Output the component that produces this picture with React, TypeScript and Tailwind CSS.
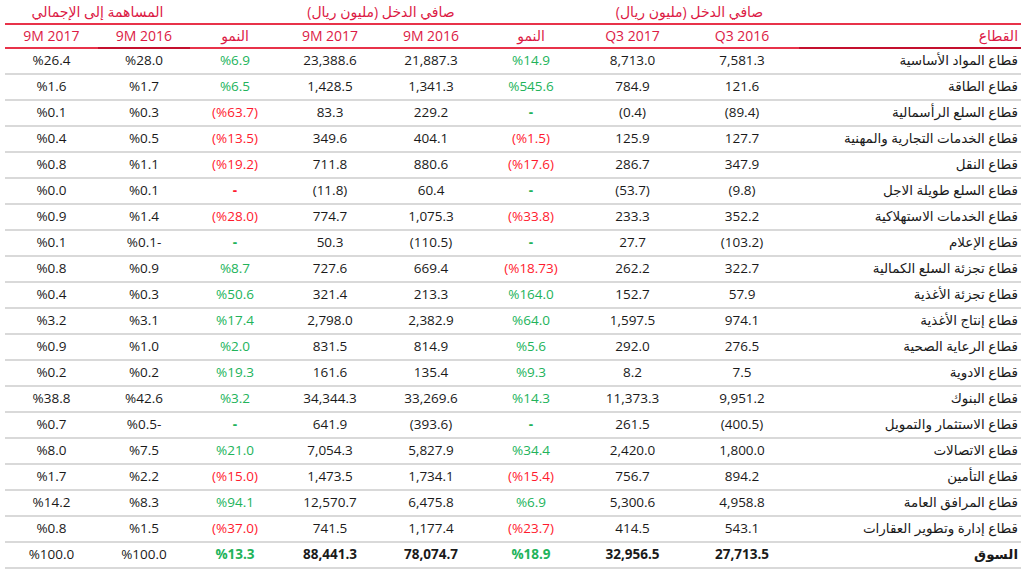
import React from "react";

// sector, Q3 2016, Q3 2017, growth, 9M 2016, 9M 2017, growth, share 9M 2016, share 9M 2017
type Row = [string, string, string, string, string, string, string, string, string];

const rows: Row[] = [
  ["قطاع المواد الأساسية", "7,581.3", "8,713.0", "%14.9", "21,887.3", "23,388.6", "%6.9", "%28.0", "%26.4"],
  ["قطاع الطاقة", "121.6", "784.9", "%545.6", "1,341.3", "1,428.5", "%6.5", "%1.7", "%1.6"],
  ["قطاع السلع الرأسمالية", "(89.4)", "(0.4)", "-g", "229.2", "83.3", "(%63.7)", "%0.3", "%0.1"],
  ["قطاع الخدمات التجارية والمهنية", "127.7", "125.9", "(%1.5)", "404.1", "349.6", "(%13.5)", "%0.5", "%0.4"],
  ["قطاع النقل", "347.9", "286.7", "(%17.6)", "880.6", "711.8", "(%19.2)", "%1.1", "%0.8"],
  ["قطاع السلع طويلة الاجل", "(9.8)", "(53.7)", "-g", "60.4", "(11.8)", "-r", "%0.1", "%0.0"],
  ["قطاع الخدمات الاستهلاكية", "352.2", "233.3", "(%33.8)", "1,075.3", "774.7", "(%28.0)", "%1.4", "%0.9"],
  ["قطاع الإعلام", "(103.2)", "27.7", "-g", "(110.5)", "50.3", "-g", "%0.1-", "%0.1"],
  ["قطاع تجزئة السلع الكمالية", "322.7", "262.2", "(%18.73)", "669.4", "727.6", "%8.7", "%0.9", "%0.8"],
  ["قطاع تجزئة الأغذية", "57.9", "152.7", "%164.0", "213.3", "321.4", "%50.6", "%0.3", "%0.4"],
  ["قطاع إنتاج الأغذية", "974.1", "1,597.5", "%64.0", "2,382.9", "2,798.0", "%17.4", "%3.1", "%3.2"],
  ["قطاع الرعاية الصحية", "276.5", "292.0", "%5.6", "814.9", "831.5", "%2.0", "%1.0", "%0.9"],
  ["قطاع الادوية", "7.5", "8.2", "%9.3", "135.4", "161.6", "%19.3", "%0.2", "%0.2"],
  ["قطاع البنوك", "9,951.2", "11,373.3", "%14.3", "33,269.6", "34,344.3", "%3.2", "%42.6", "%38.8"],
  ["قطاع الاستثمار والتمويل", "(400.5)", "261.5", "-g", "(393.6)", "641.9", "-g", "%0.5-", "%0.7"],
  ["قطاع الاتصالات", "1,800.0", "2,420.0", "%34.4", "5,827.9", "7,054.3", "%21.0", "%7.5", "%8.0"],
  ["قطاع التأمين", "894.2", "756.7", "(%15.4)", "1,734.1", "1,473.5", "(%15.0)", "%2.2", "%1.7"],
  ["قطاع المرافق العامة", "4,958.8", "5,300.6", "%6.9", "6,475.8", "12,570.7", "%94.1", "%8.3", "%14.2"],
  ["قطاع إدارة وتطوير العقارات", "543.1", "414.5", "(%23.7)", "1,177.4", "741.5", "(%37.0)", "%1.5", "%0.8"],
];

const total: Row = ["السوق", "27,713.5", "32,956.5", "%18.9", "78,074.7", "88,441.3", "%13.3", "%100.0", "%100.0"];

const widths = [222, 114, 105, 98, 102, 100, 90, 92, 93];

function Growth({ value }: { value: string }) {
  if (value === "-g") return <span className="text-[#22b35a] font-bold">-</span>;
  if (value === "-r") return <span className="text-[#ff1a2e] font-bold">-</span>;
  const negative = value.startsWith("(");
  return (
    <span dir="ltr" className={negative ? "text-[#ff1a2e]" : "text-[#22b35a]"}>
      {value}
    </span>
  );
}

function DataRow({ row, bold }: { row: Row; bold?: boolean }) {
  return (
    <tr className="h-[26px]">
      <td className={`border-b-2 border-[#d9d9d9] pr-[3px] text-right text-[#1a1a1a] ${bold ? "font-bold" : "font-normal"}`}>
        {row[0]}
      </td>
      {row.slice(1).map((v, i) => (
        // share columns stay regular weight even in the total row
        <td
          key={i}
          className={`border-b-2 border-[#d9d9d9] text-center text-[#1a1a1a] ${bold && i < 6 ? "font-bold" : "font-normal"}`}
        >
          {i === 2 || i === 5 ? <Growth value={v} /> : <span dir="ltr">{v}</span>}
        </td>
      ))}
    </tr>
  );
}

export default function App() {
  const headers = ["القطاع", "Q3 2016", "Q3 2017", "النمو", "9M 2016", "9M 2017", "النمو", "9M 2016", "9M 2017"];
  return (
    <div
      className="w-[1032px] h-[572px] bg-white pl-[5px] pr-[11px] overflow-hidden"
      style={{ fontFamily: '"Open Sans", "DejaVu Sans", sans-serif' }}
    >
      <table dir="rtl" className="w-[1016px] table-fixed border-collapse text-[13.5px] leading-none">
        <colgroup>
          {widths.map((w, i) => (
            <col key={i} style={{ width: w }} />
          ))}
        </colgroup>
        <thead>
          <tr className="h-[24px] text-[#dc1a45] text-[14px]">
            <th className="border-b-2 border-[#e8334a] font-normal" />
            <th colSpan={2} className="border-b-2 border-[#e8334a] font-normal text-center">صافي الدخل (مليون ريال)</th>
            <th className="border-b-2 border-[#e8334a] font-normal" />
            <th colSpan={2} className="border-b-2 border-[#e8334a] font-normal text-center">صافي الدخل (مليون ريال)</th>
            <th className="border-b-2 border-[#e8334a] font-normal" />
            <th colSpan={2} className="border-b-2 border-[#e8334a] font-normal text-center">المساهمة إلى الإجمالي</th>
          </tr>
          <tr className="h-[24px] text-[#dc1a45] text-[14px]">
            {headers.map((h, i) => (
              <th
                key={i}
                className={`border-b-2 font-normal ${i === 0 ? "text-right pr-[3px]" : "text-center"} ${
                  i === 0 || i === 7 ? "border-[#c4102e]" : "border-[#e8334a]"
                }`}
              >
                <span dir={i === 0 || i === 3 || i === 6 ? "rtl" : "ltr"}>{h}</span>
              </th>
            ))}
          </tr>
        </thead>
        <tbody>
          {rows.map((r) => (
            <DataRow key={r[0]} row={r} />
          ))}
          <DataRow row={total} bold />
        </tbody>
      </table>
    </div>
  );
}
